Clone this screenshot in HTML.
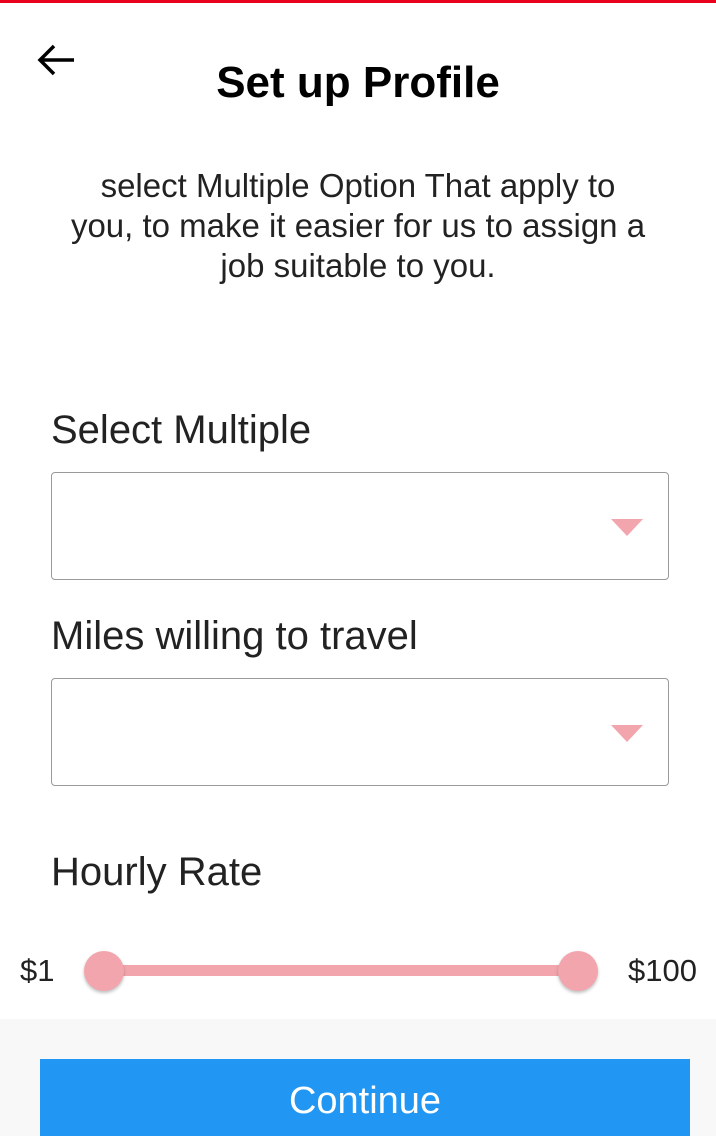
<!DOCTYPE html>
<html><head><style>
body{margin:0;width:716px;height:1136px;position:relative;background:#fff;font-family:"Liberation Sans",Arial,sans-serif;color:#222;overflow:hidden}
.a{position:absolute}
.box{position:absolute;left:51px;width:616px;height:106px;border:1.5px solid #9a9a9a;border-radius:4px}
.tri{position:absolute;width:0;height:0;border-left:16px solid transparent;border-right:16px solid transparent;border-top:17px solid #f3a5ad}
.lbl{position:absolute;left:51px;font-size:40px;line-height:40px;color:#222}
.th{position:absolute;width:40px;height:40px;border-radius:50%;background:#f3a5ad;box-shadow:0 2px 3px rgba(0,0,0,.25)}
</style></head><body>
<div class="a" style="left:0;top:0;width:716px;height:3px;background:#e8001c"></div>
<svg class="a" style="left:36px;top:42px" width="40" height="36" viewBox="0 0 40 36"><path d="M18 4 L4 18 L18 32 M4 18 H38" stroke="#000" stroke-width="3.5" fill="none"/></svg>
<div class="a" style="left:0;width:716px;top:58px;text-align:center;font-size:44px;line-height:50px;font-weight:bold;color:#000">Set up Profile</div>
<div class="a" style="left:0;width:716px;top:166px;text-align:center;font-size:33px;line-height:40px;color:#222;white-space:nowrap">select Multiple Option That apply to<br>you, to make it easier for us to assign a<br>job suitable to you.</div>
<div class="lbl" style="top:410px">Select Multiple</div>
<div class="box" style="top:472px"></div>
<div class="tri" style="left:611px;top:519px"></div>
<div class="lbl" style="top:616px">Miles willing to travel</div>
<div class="box" style="top:678px"></div>
<div class="tri" style="left:611px;top:725px"></div>
<div class="lbl" style="top:852px">Hourly Rate</div>
<div class="a" style="left:20px;top:953px;font-size:31px;line-height:36px;color:#222">$1</div>
<div class="a" style="left:628px;top:953px;font-size:31px;line-height:36px;color:#222">$100</div>
<div class="a" style="left:104px;top:965px;width:474px;height:11px;background:#f3a5ad"></div>
<div class="th" style="left:84px;top:951px"></div>
<div class="th" style="left:558px;top:951px"></div>
<div class="a" style="left:0;top:1019px;width:716px;height:117px;background:#f8f8f8"></div>
<div class="a" style="left:40px;top:1059px;width:650px;height:77px;background:#2196f3;color:#fff;text-align:center;font-size:38px;line-height:84px">Continue</div>
</body></html>
